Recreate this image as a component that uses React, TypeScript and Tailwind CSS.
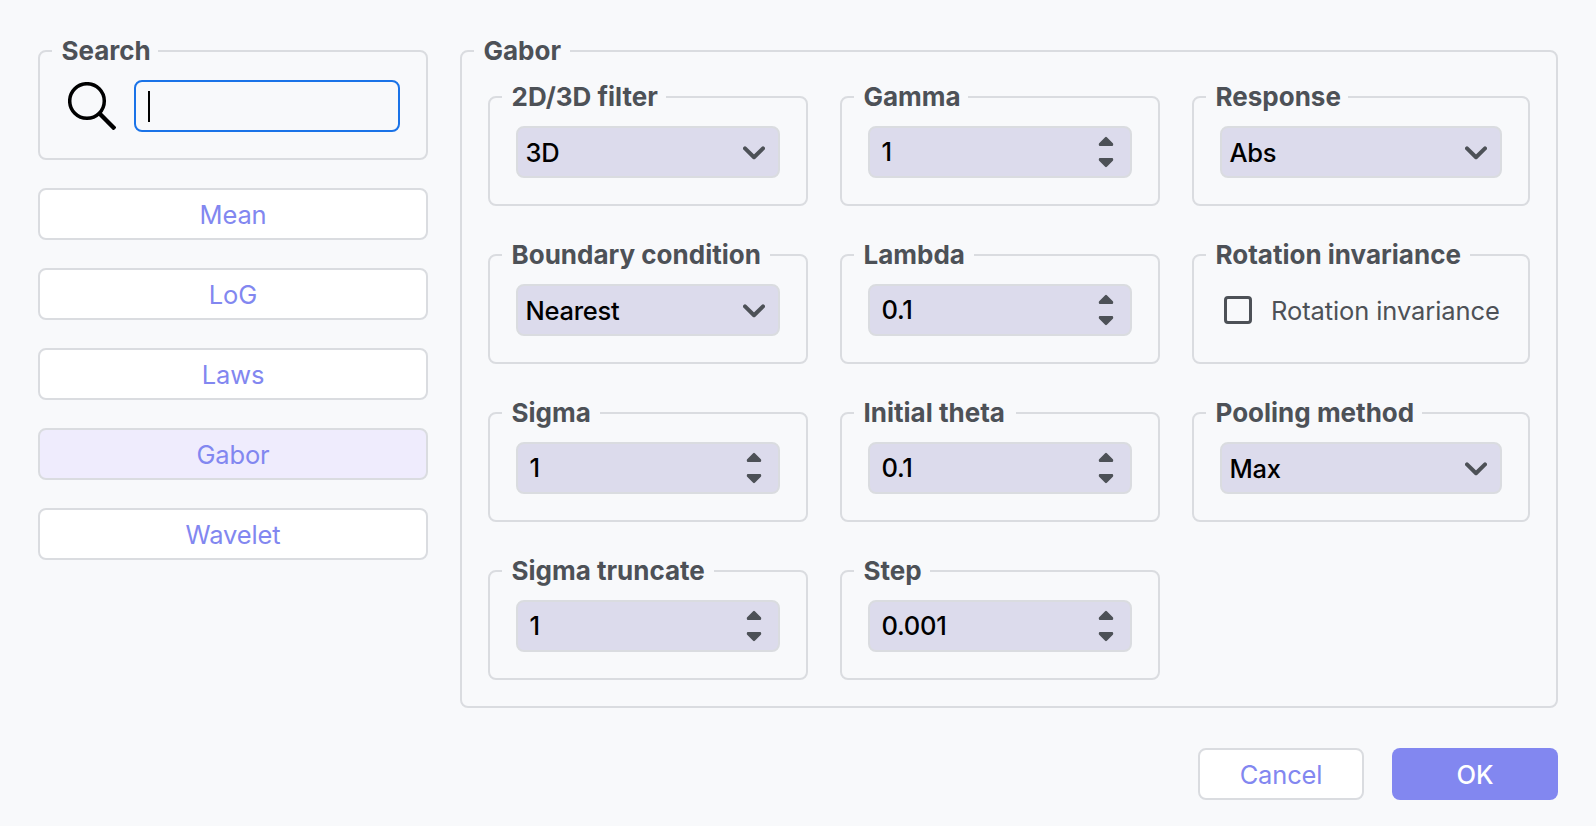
import type { ReactNode } from "react";

function Group({ title, gap, className = "", children }: { title: string; gap: string; className?: string; children: ReactNode }) {
  return (
    <fieldset className={`min-w-0 rounded-[8px] border-2 border-[#dadce0] ${className}`}>
      <legend className={`ml-3 h-8 pl-[9.5px] text-[26px] leading-8 font-bold tracking-[0px] whitespace-nowrap text-[#4d5157] ${gap}`}>
        {title}
      </legend>
      {children}
    </fieldset>
  );
}

function Field({ className = "", children }: { className?: string; children: ReactNode }) {
  return (
    <div className={`mx-[26px] mt-[13px] flex h-[52px] items-center justify-between rounded-[8px] border-2 border-[#dadce0] bg-[#dcdbec] text-[25.5px] font-medium tracking-[-0.25px] text-black ${className}`}>
      {children}
    </div>
  );
}

function Select({ value }: { value: string }) {
  return (
    <Field className="pr-[13px] pl-[7.5px]">
      <span className="pt-0.5">{value}</span>
      <svg className="mt-px h-[14px] w-[22px]" viewBox="0 0 22 14" fill="none" stroke="#4d5157" strokeWidth="4" strokeLinecap="round" strokeLinejoin="round">
        <path d="M2 2.4 11 11.2 20 2.4" />
      </svg>
    </Field>
  );
}

function Spin({ value }: { value: string }) {
  return (
    <Field className="pr-[16px] pl-[11.5px]">
      <span>{value}</span>
      <svg className="h-8 w-4" viewBox="0 0 16 32" fill="#4d5157" stroke="#4d5157" strokeWidth="2.4" strokeLinejoin="round">
        <path d="M8 2 14 8.2V8.8H2V8.2Z" />
        <path d="M8 30 14 23.8V23.2H2V23.8Z" />
      </svg>
    </Field>
  );
}

const filters = ["Mean", "LoG", "Laws", "Gabor", "Wavelet"];

export default function App() {
  return (
    <div className="h-[826px] w-[1596px] bg-[#f8f9fb] pt-[35px] pr-[38px] pl-[38px] font-['Inter',sans-serif]">
      <div className="flex gap-8">
        <aside className="w-[390px]">
          <Group title="Search" gap="w-[106px]" className="h-[125px]">
            <div className="mt-[13px] ml-7 flex items-start gap-[18px]">
              <svg className="mt-0.5 h-12 w-12" viewBox="0 0 48 48" fill="none" stroke="#000">
                <circle cx="19" cy="19" r="17.3" strokeWidth="3.5" />
                <path d="M31.5 31.5 47 47" strokeWidth="4.4" />
              </svg>
              <div className="flex h-[52px] w-[266px] items-center rounded-[8px] border-2 border-[#1a73e8] pl-3">
                <span className="h-[31px] w-0.5 bg-black" />
              </div>
            </div>
          </Group>
          <div className="mt-7 flex flex-col gap-7">
            {filters.map((name) => (
              <button
                key={name}
                className={`h-[52px] rounded-[8px] border-2 border-[#dadce0] pt-0.5 text-[25.5px] tracking-[-0.15px] text-[#8287f0] ${name === "Gabor" ? "bg-[#efecfd]" : "bg-white"}`}
              >
                {name}
              </button>
            ))}
          </div>
        </aside>

        <Group title="Gabor" gap="w-24" className="h-[673px] w-[1098px]">
          <div className="mt-[14px] ml-[26px] grid grid-cols-[320px_320px_338px] grid-rows-[repeat(4,125px)] gap-x-8 gap-y-[33px]">
            <Group title="2D/3D filter" gap="w-[164px]"><Select value="3D" /></Group>
            <Group title="Gamma" gap="w-[114px]"><Spin value="1" /></Group>
            <Group title="Response" gap="w-[142px]"><Select value="Abs" /></Group>
            <Group title="Boundary condition" gap="w-[268px]"><Select value="Nearest" /></Group>
            <Group title="Lambda" gap="w-[120px]"><Spin value="0.1" /></Group>
            <Group title="Rotation invariance" gap="w-[264px]">
              <label className="mt-[13px] ml-[30px] flex h-[52px] items-center gap-[19px] text-[25.5px] tracking-[-0.1px] whitespace-nowrap text-[#4d5157]">
                <span className="size-7 shrink-0 rounded-[4px] border-3 border-[#4d5157]" />
                <span className="pt-0.5">Rotation invariance</span>
              </label>
            </Group>
            <Group title="Sigma" gap="w-[98px]"><Spin value="1" /></Group>
            <Group title="Initial theta" gap="w-[162px]"><Spin value="0.1" /></Group>
            <Group title="Pooling method" gap="w-[216px]"><Select value="Max" /></Group>
            <Group title="Sigma truncate" gap="w-[212px]"><Spin value="1" /></Group>
            <Group title="Step" gap="w-[76px]"><Spin value="0.001" /></Group>
          </div>
        </Group>
      </div>

      <div className="mt-10 flex justify-end gap-7 text-[25.5px] tracking-[-0.15px]">
        <button className="h-[52px] w-[166px] rounded-[8px] border-2 border-[#dadce0] bg-white pt-0.5 text-[#8287f0]">Cancel</button>
        <button className="h-[52px] w-[166px] rounded-[8px] bg-[#8287f0] pt-0.5 font-medium text-white">OK</button>
      </div>
    </div>
  );
}
